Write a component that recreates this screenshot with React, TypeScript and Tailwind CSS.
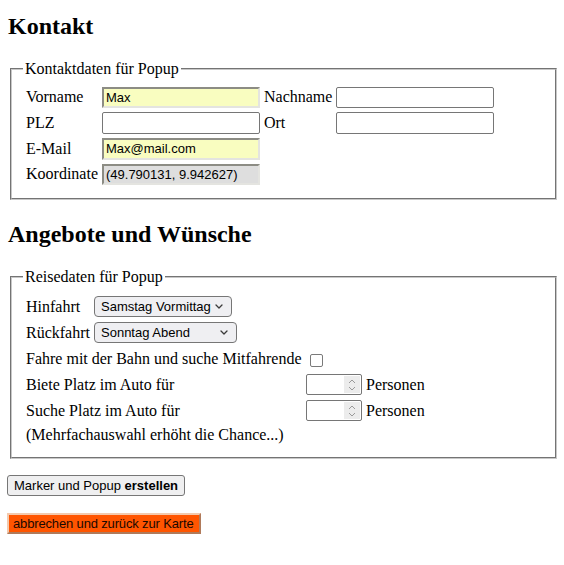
import React from 'react'

const sans = "font-['Liberation_Sans',Arial,sans-serif]"

const field = `h-[21.67px] w-[158px] px-[2px] text-[13px] text-black outline-none ${sans}`
const plain = `${field} border border-[#767676] rounded-[2px] bg-white`
const inset = `${field} border-2 border-t-[#8c8c84] border-l-[#8c8c84] border-b-[#e4e4e0] border-r-[#e4e4e0]`

const Chevron = ({ className }: { className?: string }) => (
  <svg className={className} width="8" height="5" viewBox="0 0 8 5" fill="none">
    <path d="M1 1l3 3 3-3" stroke="#3a3a3a" strokeWidth="1.3" strokeLinecap="round" strokeLinejoin="round" />
  </svg>
)

const Select = ({ options, width }: { options: string[]; width: string }) => (
  <div className="relative inline-flex">
    <select
      defaultValue={options[0]}
      className={`appearance-none h-[21px] ${width} pl-[6px] pr-[18px] border border-[#767676] rounded-[4px] bg-[#efeff2] text-[13px] text-black outline-none ${sans}`}
    >
      {options.map(o => (
        <option key={o}>{o}</option>
      ))}
    </select>
    <Chevron className="pointer-events-none absolute right-[9px] top-[8px]" />
  </div>
)

const NumberField = () => (
  <div className="flex h-[21px] w-[56px] border border-[#767676] rounded-[2px] bg-white">
    <input className={`min-w-0 flex-1 px-[2px] text-[13px] outline-none ${sans}`} />
    <div className="my-[1px] mr-[1px] flex w-[16px] flex-col items-center justify-center gap-[2px] bg-[#ececec]">
      <svg width="8" height="5" viewBox="0 0 8 5" fill="none">
        <path d="M1 4l3-3 3 3" stroke="#9a9a9a" strokeWidth="1" />
      </svg>
      <svg width="8" height="5" viewBox="0 0 8 5" fill="none">
        <path d="M1 1l3 3 3-3" stroke="#9a9a9a" strokeWidth="1" />
      </svg>
    </div>
  </div>
)

export default function App() {
  return (
    <div className="min-h-screen bg-white pl-[8px] pr-[5px] pt-[13px] font-['Liberation_Serif','Times_New_Roman',serif] text-[16px] leading-[normal] text-black">
      <h2 className="mb-[20px] text-[24px] font-bold">Kontakt</h2>

      <fieldset className="mx-[2px] border-2 border-[#c8c8c8] [border-style:groove] pt-[5.6px] pb-[10px] pl-[11px] pr-[12px]">
        <legend className="px-[2px]">Kontaktdaten für Popup</legend>
        <table className="border-separate border-spacing-[2px]">
          <tbody>
            <tr>
              <td className="p-[1px]">Vorname</td>
              <td className="p-[1px]"><input className={`${inset} bg-[#f9fdc0]`} defaultValue="Max" /></td>
              <td className="p-[1px]">Nachname</td>
              <td className="p-[1px]"><input className={plain} /></td>
            </tr>
            <tr>
              <td className="p-[1px]">PLZ</td>
              <td className="p-[1px]"><input className={plain} /></td>
              <td className="p-[1px]">Ort</td>
              <td className="p-[1px]"><input className={plain} /></td>
            </tr>
            <tr>
              <td className="p-[1px]">E-Mail</td>
              <td className="p-[1px]"><input className={`${inset} bg-[#f9fdc0]`} defaultValue="Max@mail.com" /></td>
              <td className="p-[1px]" />
              <td className="p-[1px]" />
            </tr>
            <tr>
              <td className="p-[1px]">Koordinate</td>
              <td className="p-[1px]">
                <input readOnly className={`${inset} bg-[#dedede] text-[#333]`} defaultValue="(49.790131, 9.942627)" />
              </td>
              <td className="p-[1px]" />
              <td className="p-[1px]" />
            </tr>
          </tbody>
        </table>
      </fieldset>

      <h2 className="mt-[21px] mb-[20px] text-[24px] font-bold">Angebote und Wünsche</h2>

      <fieldset className="mx-[2px] border-2 border-[#c8c8c8] [border-style:groove] pt-[5.6px] pb-[10px] pl-[11px] pr-[12px]">
        <legend className="px-[2px]">Reisedaten für Popup</legend>
        <div className="mt-[2px] grid grid-cols-[68px_212px_60px_auto] grid-rows-[26px_26px_26px_26px_26px_23px] items-center pl-[3px]">
          <span>Hinfahrt</span>
          <div className="col-span-3"><Select width="w-[138px]" options={['Samstag Vormittag', 'Samstag Abend', 'Sonntag Vormittag']} /></div>

          <span>Rückfahrt</span>
          <div className="col-span-3"><Select width="w-[143px]" options={['Sonntag Abend', 'Sonntag Nachmittag', 'Montag Vormittag']} /></div>

          <span className="col-span-2 whitespace-nowrap">Fahre mit der Bahn und suche Mitfahrende</span>
          <div className="col-span-2 flex">
            <input type="checkbox" className="mt-[3px] ml-[4px] h-[13px] w-[13px] appearance-none rounded-[2px] border-[1.5px] border-[#7a7a7a] bg-white" />
          </div>

          <span className="col-span-2 whitespace-nowrap">Biete Platz im Auto für</span>
          <NumberField />
          <span>Personen</span>

          <span className="col-span-2 whitespace-nowrap">Suche Platz im Auto für</span>
          <NumberField />
          <span>Personen</span>

          <span className="col-span-4 whitespace-nowrap">(Mehrfachauswahl erhöht die Chance...)</span>
        </div>
      </fieldset>

      <div className="-ml-[1px] mt-[16px] flex flex-col items-start gap-[17px]">
        <button className={`h-[21px] rounded-[3px] border border-[#767676] bg-[#efeff0] px-[6px] text-[13px] text-black ${sans}`}>
          Marker und Popup <b>erstellen</b>
        </button>
        <button className={`h-[21px] w-[194px] whitespace-nowrap border-2 border-t-[#f3c9ad] border-l-[#f3c9ad] border-b-[#b07a5a] border-r-[#b07a5a] bg-[#ff5500] px-[4px] text-left text-[13px] tracking-[-0.15px] text-[#1a0800] ${sans}`}>
          abbrechen und zurück zur Karte
        </button>
      </div>
    </div>
  )
}
